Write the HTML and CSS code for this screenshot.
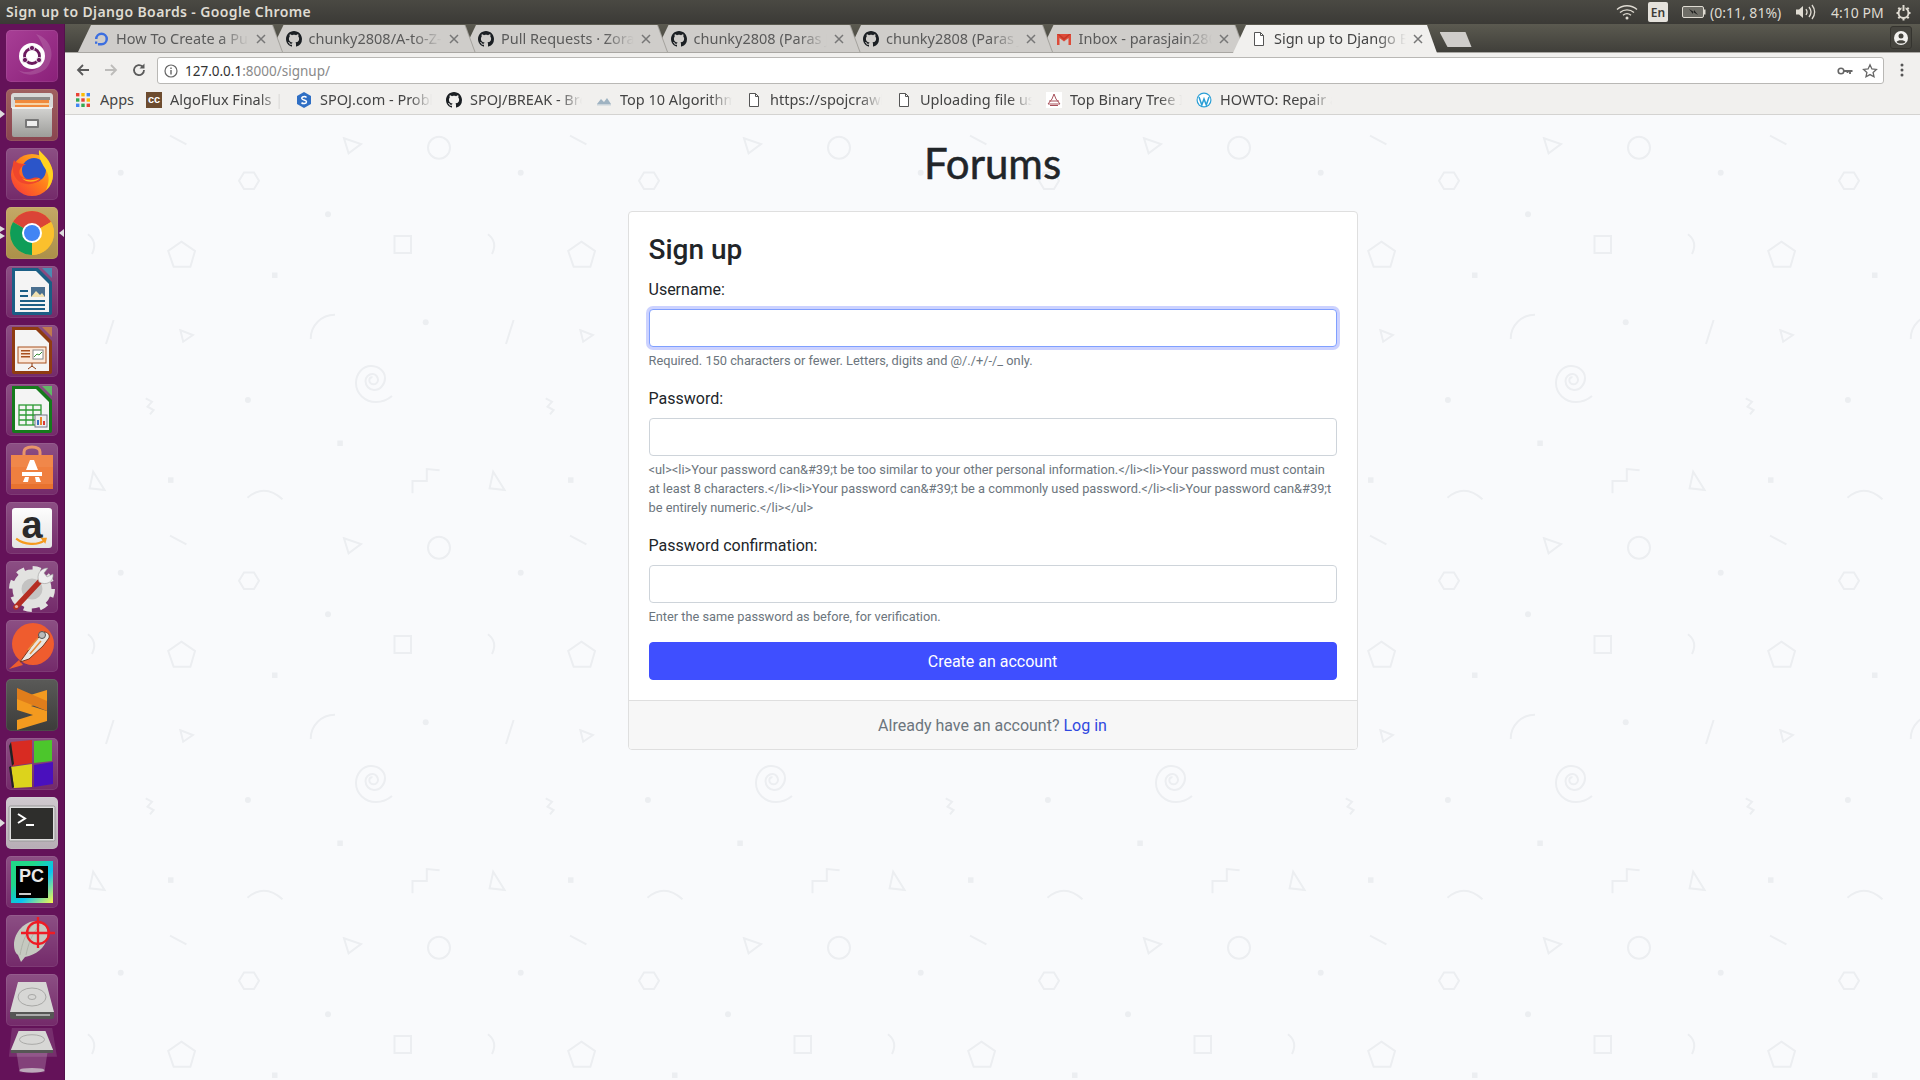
FILE: index.html
```html
<!DOCTYPE html>
<html lang="en">
<head>
<meta charset="utf-8">
<title>Sign up to Django Boards</title>
<link rel="stylesheet" href="styles.css">
</head>
<body>
<svg class="defs" width="0" height="0" aria-hidden="true">
  <symbol id="gh" viewBox="0 0 16 16"><path fill="#1b1f23" d="M8 0C3.58 0 0 3.58 0 8c0 3.54 2.29 6.53 5.47 7.59.4.07.55-.17.55-.38 0-.19-.01-.82-.01-1.49-2.01.37-2.53-.49-2.69-.94-.09-.23-.48-.94-.82-1.13-.28-.15-.68-.52-.01-.53.63-.01 1.08.58 1.23.82.72 1.21 1.87.87 2.33.66.07-.52.28-.87.51-1.07-1.78-.2-3.64-.89-3.64-3.95 0-.87.31-1.59.82-2.15-.08-.2-.36-1.02.08-2.12 0 0 .67-.21 2.2.82.64-.18 1.32-.27 2-.27.68 0 1.36.09 2 .27 1.53-1.04 2.2-.82 2.2-.82.44 1.1.16 1.92.08 2.12.51.56.82 1.27.82 2.15 0 3.07-1.87 3.75-3.65 3.95.29.25.54.73.54 1.48 0 1.07-.01 1.93-.01 2.2 0 .21.15.46.55.38A8.013 8.013 0 0 0 16 8c0-4.42-3.58-8-8-8z"/></symbol>
  <symbol id="doc" viewBox="0 0 16 16"><path fill="#fff" stroke="#555" stroke-width="1" d="M3.5 1.5h6l3 3v10h-9z"/><path fill="none" stroke="#555" d="M9.5 1.5v3h3"/></symbol>
  <symbol id="close" viewBox="0 0 10 10"><path stroke="#777" stroke-width="1.5" d="M1 1l8 8M9 1l-8 8"/></symbol>
</svg>

<header class="topbar">
  <div class="win-title">Sign up to Django Boards - Google Chrome</div>
  <div class="indicators">
    <svg class="ind-wifi" width="22" height="16" viewBox="0 0 22 16"><g fill="none" stroke="#dfdbd2" stroke-width="1.4"><path d="M1 5.5c5.5-5 14.5-5 20 0"/><path d="M4 8.5c4-3.5 10-3.5 14 0"/><path d="M7 11.3c2.400-2 5.600-2 8 0"/></g><circle cx="11" cy="14" r="1.500" fill="#dfdbd2"/></svg>
    <span class="ind-lang">En</span>
    <svg class="ind-batt" width="24" height="13" viewBox="0 0 24 13"><rect x=".5" y=".5" width="21" height="11" rx="1.500" fill="#6f6e67" stroke="#dfdbd2"/><rect x="22" y="3.500" width="1.500" height="5" fill="#dfdbd2"/><path d="M7 3l5 3 0-2 4 5-5-3 0 2z" fill="#222"/></svg>
    <span class="ind-text ind-pct">(0:11, 81%)</span>
    <svg class="ind-vol" width="21" height="16" viewBox="0 0 21 16"><path d="M1 5.500h3l4-3.500v12l-4-3.500h-3z" fill="#dfdbd2"/><g fill="none" stroke="#dfdbd2" stroke-width="1.300"><path d="M11 5c1.400 2 1.400 4 0 6"/><path d="M14 3c2.400 3 2.400 7 0 10"/><path d="M17 1c3.400 4.500 3.400 9.500 0 14"/></g></svg>
    <span class="ind-text ind-clock">4:10 PM</span>
    <svg class="ind-gear" width="17" height="17" viewBox="0 0 17 17"><circle cx="8.500" cy="9" r="5" fill="none" stroke="#dfdbd2" stroke-width="2"/><path d="M8.500 1v6" stroke="#3f3e39" stroke-width="4"/><path d="M8.500 1v6M1.500 9h2M13.500 9h2M3.300 3.800l1.500 1.500M13.700 3.800l-1.500 1.500M3.300 14.200l1.500-1.500M13.700 14.200l-1.500-1.500M8.500 14v2.500" stroke="#dfdbd2" stroke-width="2"/></svg>
  </div>
</header>

<div class="desktop">
  <nav class="launcher">
    <div class="tile tile-dash"><svg viewBox="0 0 52 52"><path d="M30 4c14 4 20 20 12 32-6 9-22 12-30 4 12 6 26-2 26-16 0-8-4-15-8-20z" fill="#fff" opacity=".14"/><circle cx="26" cy="26" r="13" fill="#fff"/><circle cx="26" cy="26" r="7.500" fill="none" stroke="#6b1a5e" stroke-width="2.800"/><circle cx="26" cy="18" r="2.600" fill="#6b1a5e" stroke="#fff" stroke-width=".8"/><circle cx="19" cy="30" r="2.600" fill="#6b1a5e" stroke="#fff" stroke-width=".8"/><circle cx="33" cy="30" r="2.600" fill="#6b1a5e" stroke="#fff" stroke-width=".8"/></svg></div>
    <div class="tile tile-files"><svg viewBox="0 0 52 52"><defs><linearGradient id="cab" x1="0" y1="0" x2="0" y2="1"><stop offset="0" stop-color="#d4d4d2"/><stop offset="1" stop-color="#9d9d9a"/></linearGradient></defs><path d="M5 7c0-1.500 1-3 3-3h36c2 0 3 1.500 3 3v12H5z" fill="#d9d9d7"/><rect x="8" y="8" width="36" height="3" fill="#8c8a88"/><rect x="9" y="11" width="34" height="9" fill="#f08a3c"/><rect x="9" y="14" width="34" height="2" fill="#f7d3a5"/><rect x="6" y="18" width="40" height="30" rx="2" fill="url(#cab)"/><rect x="6" y="18" width="40" height="2" fill="#efefed"/><rect x="19" y="30" width="14" height="9" rx="1" fill="#777"/><rect x="21" y="32" width="10" height="5" fill="#eee"/></svg></div>
    <div class="tile tile-plain"><svg viewBox="0 0 52 52"><defs><linearGradient id="ffo" x1="0" y1="1" x2="1" y2="0"><stop offset="0" stop-color="#f5313c"/><stop offset=".5" stop-color="#ff7b1c"/><stop offset="1" stop-color="#ffc820"/></linearGradient></defs><circle cx="26" cy="27" r="21" fill="url(#ffo)"/><circle cx="28" cy="22" r="12" fill="#2b55c9"/><path d="M33 2c3 4 13 10 14 24 0 7-3 13-7 16 3-6 4-14 0-20-3-5-8-12-7-20z" fill="#ffd21f"/><path d="M8 12c2 3 6 4 12 4-6 3-8 7-6 11 3 4 9 5 13 3 4-1 6 0 8 1-4 5-14 7-21 3C7 30 5 20 8 12z" fill="#f0462c"/><path d="M16 30c5 3 11 3 18 0-3 4-13 6-18 0z" fill="#ffb21e"/></svg></div>
    <div class="tile tile-chrome"><svg viewBox="0 0 52 52"><circle cx="26" cy="26" r="22" fill="#fbc02d"/><path d="M26 26L7 15A22 22 0 0 1 45 15z" fill="#db4437"/><path d="M26 26L7 15A22 22 0 0 0 26 48z" fill="#0f9d58"/><path d="M26 26L26 48A22 22 0 0 0 45 15z" fill="#fbc02d"/><circle cx="26" cy="26" r="10" fill="#fff"/><circle cx="26" cy="26" r="8" fill="#4285f4"/></svg></div>
    <div class="tile tile-plain"><svg viewBox="0 0 52 52"><path d="M6 2h26l14 14v31a2 2 0 0 1-2 2H8a2 2 0 0 1-2-2z" fill="#1b5e85"/><path d="M36 2h10v10z" fill="#4b8bb2"/><path d="M9 5h21l13 13v28H9z" fill="#f4f4f4"/><g fill="#1b5e85"><rect x="14" y="24" width="8" height="2"/><rect x="14" y="29" width="8" height="2"/><rect x="14" y="34" width="25" height="2"/><rect x="14" y="38" width="25" height="2"/><rect x="14" y="42" width="25" height="2"/></g><rect x="25" y="21" width="14" height="10" fill="#4a6f8f"/><path d="M25 31l5-6 4 4 2-2 3 4z" fill="#f0e0b0"/></svg></div>
    <div class="tile tile-plain"><svg viewBox="0 0 52 52"><path d="M6 2h26l14 14v31a2 2 0 0 1-2 2H8a2 2 0 0 1-2-2z" fill="#8f3c12"/><path d="M36 2h10v10z" fill="#c07a4f"/><path d="M9 5h21l13 13v28H9z" fill="#f4f4f4"/><rect x="12" y="22" width="28" height="16" fill="#fbe7d8" stroke="#a8501e"/><g fill="#a8501e"><rect x="15" y="25" width="9" height="1.500"/><rect x="15" y="28" width="9" height="1.500"/><rect x="15" y="31" width="9" height="1.500"/></g><rect x="27" y="25" width="10" height="9" fill="#fff" stroke="#888"/><path d="M28 32l3-3 2 1 3-3" fill="none" stroke="#3a8f3a"/><path d="M26 38v4M22 44l4-3 4 3" stroke="#8f3c12" fill="none"/></svg></div>
    <div class="tile tile-plain"><svg viewBox="0 0 52 52"><path d="M6 2h26l14 14v31a2 2 0 0 1-2 2H8a2 2 0 0 1-2-2z" fill="#167a1c"/><path d="M36 2h10v10z" fill="#62b866"/><path d="M9 5h21l13 13v28H9z" fill="#f4f4f4"/><g fill="none" stroke="#2d9a35" stroke-width="1.300"><rect x="13" y="21" width="22" height="20"/><path d="M13 26h22M13 31h22M13 36h22M20 21v20M27 21v20"/></g><rect x="29" y="31" width="12" height="12" fill="#eee" stroke="#778"/><rect x="31" y="36" width="2" height="5" fill="#3a6fc0"/><rect x="34" y="33" width="2" height="8" fill="#e8842c"/><rect x="37" y="37" width="2" height="4" fill="#d83a3a"/></svg></div>
    <div class="tile tile-plain"><svg viewBox="0 0 52 52"><path d="M18 14V9c0-4 3-5 8-5s8 1 8 5v5" fill="none" stroke="#e8956a" stroke-width="3"/><rect x="5" y="12" width="42" height="34" fill="#ef7f3f"/><rect x="5" y="12" width="42" height="12" fill="#f0874a"/><rect x="5" y="41" width="42" height="5" fill="#e8722f"/><path d="M24 17h4l4 10h-12zM16 29h20v4H16zM19 34h4l-1 5h-5zM29 34h4l2 5h-5z" fill="#fff"/></svg></div>
    <div class="tile tile-plain"><div class="amazon"><span class="amazon-a">a</span><svg class="amazon-smile" viewBox="0 0 40 12"><path d="M1 2c10 8 26 8 34 2" fill="none" stroke="#f59a1e" stroke-width="2.500"/><path d="M30 1l8 0-2 7z" fill="#f59a1e"/></svg></div></div>
    <div class="tile tile-plain"><svg viewBox="0 0 52 52"><circle cx="26" cy="28" r="15" fill="#c4c3c2" stroke="#e2e2e0" stroke-width="9"/><circle cx="26" cy="28" r="20.500" fill="none" stroke="#e2e2e0" stroke-width="5" stroke-dasharray="8 8.100"/><path d="M10 46L36 18" stroke="#b52d22" stroke-width="5.500" stroke-linecap="round"/><circle cx="10.500" cy="45.500" r="1.600" fill="#e6b0a8"/><path d="M33 21c-3-7 1-14 9-14l-4 5 3 4 6-3c1 8-7 12-14 8z" fill="#eeeeee" stroke="#999" stroke-width=".6"/></svg></div>
    <div class="tile tile-plain"><svg viewBox="0 0 52 52"><circle cx="27" cy="24" r="21" fill="#ef5c2e"/><path d="M3 49l10-9 4 5z" fill="#ef5c2e"/><path d="M14 42l16-22 8-8c4 0 6 3 5 6l-6 8-14 13z" fill="#e8e5e0" stroke="#7a3a22"/><path d="M22 30l10-12M24 34l11-13" stroke="#e88d3a" stroke-width="1.500"/><circle cx="36" cy="15" r="3.500" fill="#bbb" stroke="#555"/></svg></div>
    <div class="tile tile-subl"><svg viewBox="0 0 52 52"><path d="M11 20l30-9v11l-16 5 16 5v10l-30 9v-10l16-5-16-5z" fill="#f39a1f"/><path d="M11 20l30 12v-10l-30-13z" fill="#e07d1b"/></svg></div>
    <div class="tile tile-plain"><svg viewBox="0 0 52 52"><path d="M5 4l21-2v23l-20 3z" fill="#d82b22"/><path d="M5 4L3 8l3 20 2-2z" fill="#222"/><path d="M28 3l18-1v21l-18 2z" fill="#4cc62c"/><path d="M5 29l21-3v23l-18 1z" fill="#dcd31c"/><path d="M3 29l2-1 3 21-2 1z" fill="#222"/><path d="M28 27l19-3v22l-19 3z" fill="#4a10bd"/></svg></div>
    <div class="tile tile-term"><svg viewBox="0 0 52 52"><rect x="3" y="9" width="46" height="35" rx="1.500" fill="#ddd" stroke="#999"/><rect x="5" y="11" width="42" height="31" fill="#2e2e2c"/><path d="M12 17l7 4.500-7 4.500" fill="none" stroke="#fff" stroke-width="2"/><rect x="20" y="27" width="8" height="2" fill="#fff"/></svg></div>
    <div class="tile tile-plain"><div class="pycharm"><span class="pc-text">PC</span><span class="pc-line"></span></div></div>
    <div class="tile tile-plain"><svg viewBox="0 0 52 52"><path d="M8 30c0-13 11-24 22-24 9 0 13 8 11 17-2 10-11 17-22 19l-4 5-3-7c-3-2-4-6-4-10z" fill="#c5c9c0"/><path d="M14 40c2-10 4-20 14-32M20 40c2-10 6-22 14-30" stroke="#aeb2a8" fill="none"/><circle cx="32" cy="18" r="11" fill="none" stroke="#ee1c25" stroke-width="2.300"/><path d="M32 2v31M15 18h34" stroke="#ee1c25" stroke-width="2.300"/></svg></div>
    <div class="tile tile-plain"><svg viewBox="0 0 52 52"><path d="M12 8h28l8 30H4z" fill="#d7d7d5"/><ellipse cx="26" cy="23" rx="14" ry="9" fill="none" stroke="#a8a8a6"/><ellipse cx="26" cy="23" rx="4" ry="2.500" fill="none" stroke="#a8a8a6"/><path d="M4 38h44v5a2 2 0 0 1-2 2H6a2 2 0 0 1-2-2z" fill="#565655"/><rect x="10" y="40" width="34" height="2" fill="#aaa"/></svg></div>
    <div class="tile tile-trash"><svg viewBox="0 0 52 52"><path d="M5 0h42l5 30-2 0H2z" fill="#fff" opacity=".12"/><path d="M12 3h28l8 20H4z" fill="#d7d7d5"/><ellipse cx="26" cy="12" rx="13" ry="5" fill="none" stroke="#a8a8a6"/><path d="M4 23h44v3H4z" fill="#565655"/><path d="M10 26h32l-3 20H13z" fill="#fff" opacity=".2"/><ellipse cx="26" cy="44" rx="13" ry="2.500" fill="#d5d5d5" opacity=".7"/></svg></div>
    <span class="pip pip-files"></span>
    <span class="pip pip-chrome-a"></span>
    <span class="pip pip-chrome-b"></span>
    <span class="pip pip-chrome-r"></span>
    <span class="pip pip-term"></span>
  </nav>

  <div class="window">
    <div class="tabstrip">
      <div class="tab"><div class="tab-body">
        <svg class="fav" viewBox="0 0 16 16"><path d="M8.500 1.500a6.500 6.500 0 0 1 0 13H5v-2.500h3.500a4 4 0 0 0 0-8 4 4 0 0 0-4 4H2a6.500 6.500 0 0 1 6.500-6.500z" fill="#3c6fe0"/><rect x="2" y="10.500" width="2.300" height="2.300" fill="#3c6fe0"/></svg>
        <span class="tab-title">How To Create a Pull Request</span><svg class="tab-x" viewBox="0 0 10 10"><use href="#close"/></svg>
      </div></div>
      <div class="tab"><div class="tab-body"><svg class="fav" viewBox="0 0 16 16"><use href="#gh"/></svg><span class="tab-title">chunky2808/A-to-Z-Resources</span><svg class="tab-x" viewBox="0 0 10 10"><use href="#close"/></svg></div></div>
      <div class="tab"><div class="tab-body"><svg class="fav" viewBox="0 0 16 16"><use href="#gh"/></svg><span class="tab-title">Pull Requests · Zoranpandovski</span><svg class="tab-x" viewBox="0 0 10 10"><use href="#close"/></svg></div></div>
      <div class="tab"><div class="tab-body"><svg class="fav" viewBox="0 0 16 16"><use href="#gh"/></svg><span class="tab-title">chunky2808 (Paras Jain)</span><svg class="tab-x" viewBox="0 0 10 10"><use href="#close"/></svg></div></div>
      <div class="tab"><div class="tab-body"><svg class="fav" viewBox="0 0 16 16"><use href="#gh"/></svg><span class="tab-title">chunky2808 (Paras Jain)</span><svg class="tab-x" viewBox="0 0 10 10"><use href="#close"/></svg></div></div>
      <div class="tab"><div class="tab-body"><svg class="fav" viewBox="0 0 16 16"><path d="M1 3h14v11h-2.500V7L8 10.500 3.500 7v7H1z" fill="#dd4b39"/><path d="M1 3h2l5 4 5-4h2L8 9z" fill="#c53929"/></svg><span class="tab-title">Inbox - parasjain2808@gmail</span><svg class="tab-x" viewBox="0 0 10 10"><use href="#close"/></svg></div></div>
      <div class="tab tab-active"><div class="tab-body"><svg class="fav" viewBox="0 0 16 16"><use href="#doc"/></svg><span class="tab-title">Sign up to Django Boards</span><svg class="tab-x" viewBox="0 0 10 10"><use href="#close"/></svg></div></div>
      <div class="newtab"></div>
      <div class="profile"><svg width="16" height="16" viewBox="0 0 16 16"><circle cx="8" cy="8" r="7" fill="#f2f1ef"/><circle cx="8" cy="6" r="2.500" fill="#45443e"/><path d="M3.500 12c1-2.500 8-2.500 9 0-2 2-7 2-9 0z" fill="#45443e"/></svg></div>
    </div>

    <div class="toolbar">
      <svg class="tb-btn" viewBox="0 0 16 16"><path d="M14 8H3M8 3L3 8l5 5" fill="none" stroke="#5a5a5a" stroke-width="1.800"/></svg>
      <svg class="tb-btn" viewBox="0 0 16 16"><path d="M2 8h11M8 3l5 5-5 5" fill="none" stroke="#bdbcba" stroke-width="1.800"/></svg>
      <svg class="tb-btn" viewBox="0 0 16 16"><path d="M13 8a5 5 0 1 1-1.500-3.500" fill="none" stroke="#5a5a5a" stroke-width="1.800"/><path d="M13.500 1.500v5h-5z" fill="#5a5a5a"/></svg>
      <div class="urlbar">
        <svg class="url-info" viewBox="0 0 14 14"><circle cx="7" cy="7" r="6" fill="none" stroke="#666" stroke-width="1.200"/><path d="M7 6v4.500M7 3.500v1.500" stroke="#666" stroke-width="1.400"/></svg>
        <span class="url-text"><span class="url-host">127.0.0.1</span>:8000/signup/</span>
        <svg class="url-key" viewBox="0 0 16 10"><circle cx="4" cy="5" r="2.800" fill="none" stroke="#666" stroke-width="1.600"/><path d="M7 5h8.500M13 5v3M10.500 5v2" stroke="#666" stroke-width="1.800"/></svg>
        <svg class="url-star" viewBox="0 0 16 16"><path d="M8 1.800l1.900 4.100 4.500.5-3.300 3 .9 4.400L8 11.600l-4 2.200.9-4.400-3.300-3 4.500-.5z" fill="none" stroke="#666" stroke-width="1.300"/></svg>
      </div>
      <svg class="tb-menu" viewBox="0 0 4 14"><circle cx="2" cy="2" r="1.500" fill="#555"/><circle cx="2" cy="7" r="1.500" fill="#555"/><circle cx="2" cy="12" r="1.500" fill="#555"/></svg>
    </div>

    <div class="bookmarks">
      <div class="bm bm-apps"><svg class="fav" viewBox="0 0 16 16"><rect x="1" y="1" width="3.400" height="3.400" fill="#ea4335"/><rect x="6.300" y="1" width="3.400" height="3.400" fill="#fbbc05"/><rect x="11.600" y="1" width="3.400" height="3.400" fill="#4285f4"/><rect x="1" y="6.300" width="3.400" height="3.400" fill="#34a853"/><rect x="6.300" y="6.300" width="3.400" height="3.400" fill="#ea4335"/><rect x="11.600" y="6.300" width="3.400" height="3.400" fill="#fbbc05"/><rect x="1" y="11.600" width="3.400" height="3.400" fill="#4285f4"/><rect x="6.300" y="11.600" width="3.400" height="3.400" fill="#34a853"/><rect x="11.600" y="11.600" width="3.400" height="3.400" fill="#ea4335"/></svg><span class="bm-label">Apps</span></div>
      <div class="bm"><span class="fav fav-cc">cc</span><span class="bm-label">AlgoFlux Finals | CodeChef</span></div>
      <div class="bm"><svg class="fav" viewBox="0 0 16 16"><path d="M8 0l7 4v8l-7 4-7-4V4z" fill="#2f6fc4"/><path d="M10.500 5.500C9 4 5.500 4.500 5.800 6.500c.3 2 4.700 1 4.700 3.300 0 2-3.500 2.300-5 .8" fill="none" stroke="#fff" stroke-width="1.500"/></svg><span class="bm-label">SPOJ.com - Problem</span></div>
      <div class="bm"><svg class="fav" viewBox="0 0 16 16"><use href="#gh"/></svg><span class="bm-label">SPOJ/BREAK - Break</span></div>
      <div class="bm"><svg class="fav" viewBox="0 0 16 16"><path d="M1 12l4-5 3 3 3-4 4 6z" fill="#9fb3c2"/><rect x="1" y="12" width="14" height="1.500" fill="#c9d3da"/></svg><span class="bm-label">Top 10 Algorithms</span></div>
      <div class="bm"><svg class="fav" viewBox="0 0 16 16"><use href="#doc"/></svg><span class="bm-label">https://spojcrawler</span></div>
      <div class="bm"><svg class="fav" viewBox="0 0 16 16"><use href="#doc"/></svg><span class="bm-label">Uploading file using</span></div>
      <div class="bm"><svg class="fav" viewBox="0 0 16 16"><rect width="16" height="16" fill="#fff"/><path d="M8 2l2 5 4 5H2l4-5z" fill="none" stroke="#a8505a"/><path d="M3 9h10M4 13.500h8" stroke="#a8505a"/></svg><span class="bm-label">Top Binary Tree Interview</span></div>
      <div class="bm"><svg class="fav" viewBox="0 0 16 16"><circle cx="8" cy="8" r="7.500" fill="#2a9fd6"/><circle cx="8" cy="8" r="6.300" fill="#fff"/><path d="M3 5l2.800 8L8 7l2.300 6 2.700-8" fill="none" stroke="#2a9fd6" stroke-width="1.500"/></svg><span class="bm-label">HOWTO: Repair and</span></div>
    </div>

    <main class="page">
      <h1 class="logo">Forums</h1>
      <section class="card">
        <div class="card-body">
          <h3 class="card-title">Sign up</h3>
          <form class="signup">
            <div class="form-group">
              <label class="field-label" for="id_username">Username:</label>
              <input class="form-control form-control-focus" id="id_username" type="text">
              <small class="help">Required. 150 characters or fewer. Letters, digits and @/./+/-/_ only.</small>
            </div>
            <div class="form-group">
              <label class="field-label" for="id_password1">Password:</label>
              <input class="form-control" id="id_password1" type="password">
              <small class="help">&lt;ul&gt;&lt;li&gt;Your password can&amp;#39;t be too similar to your other personal information.&lt;/li&gt;&lt;li&gt;Your password must contain at least 8 characters.&lt;/li&gt;&lt;li&gt;Your password can&amp;#39;t be a commonly used password.&lt;/li&gt;&lt;li&gt;Your password can&amp;#39;t be entirely numeric.&lt;/li&gt;&lt;/ul&gt;</small>
            </div>
            <div class="form-group form-group-last">
              <label class="field-label" for="id_password2">Password confirmation:</label>
              <input class="form-control" id="id_password2" type="password">
              <small class="help">Enter the same password as before, for verification.</small>
            </div>
            <button class="btn-primary" type="button">Create an account</button>
          </form>
        </div>
        <div class="card-footer">Already have an account? <a class="login-link" href="#">Log in</a></div>
      </section>
    </main>
  </div>
</div>
</body>
</html>
```
FILE: styles.css
```css
* { box-sizing: border-box; }
html, body { margin: 0; height: 100%; }
body {
  width: 1920px;
  height: 1080px;
  overflow: hidden;
  display: flex;
  flex-direction: column;
  font-family: Roboto, "Noto Sans", sans-serif;
  background: #3c3b37;
}
.defs { display: block; height: 0; }

/* Ubuntu panel */
.topbar {
  height: 24px;
  flex: none;
  display: flex;
  align-items: center;
  justify-content: space-between;
  padding: 0 8px 0 6px;
  background: linear-gradient(#4a4943, #3b3a36);
  color: #dfdbd2;
}
.win-title {
  padding-bottom: 2px;
  font: 600 14px "Noto Sans", sans-serif;
  letter-spacing: .38px;
  white-space: nowrap;
}
.indicators { display: flex; align-items: center; }
.ind-wifi { margin-right: 10px; }
.ind-lang {
  width: 20px;
  height: 20px;
  margin-right: 14px;
  display: flex;
  align-items: center;
  justify-content: center;
  border-radius: 2px;
  background: #e5e2dc;
  color: #3c3b37;
  font: 600 12px "Noto Sans", sans-serif;
}
.ind-batt { margin-right: 4px; }
.ind-text { font: 400 14px "Noto Sans", sans-serif; white-space: nowrap; }
.ind-pct { width: 85px; }
.ind-vol { margin-right: 15px; }
.ind-clock { width: 64px; }

/* Layout */
.desktop { flex: 1; min-height: 0; display: flex; }
.window { flex: 1; min-width: 0; display: flex; flex-direction: column; }

/* Launcher */
.launcher {
  position: relative;
  flex: none;
  width: 65px;
  height: 1056px;
  padding: 6px 7px 0 6px;
  display: flex;
  flex-direction: column;
  gap: 7px;
  overflow: hidden;
  background: #641259;
  border-right: 1px solid #54104c;
}
.tile {
  flex: none;
  width: 52px;
  height: 52px;
  border-radius: 5px;
  background: linear-gradient(rgba(255,255,255,.26), rgba(255,255,255,.1));
  box-shadow: inset 0 0 0 1px rgba(255,255,255,.08);
}
.tile svg { display: block; width: 100%; height: 100%; }
.tile-dash { background: linear-gradient(135deg, #a83f96, #8a2079); }
.tile-files { background: linear-gradient(#a0605f, #8a4550); }
.tile-chrome { background: linear-gradient(#c4a866, #ab9049); }
.tile-subl { background: linear-gradient(#5a5a58, #3c3c3a); }
.tile-term { background: linear-gradient(#cfc9ce, #b7adb5); }
.tile-trash { height: 50px; margin-top: -5px; background: none; box-shadow: none; }
.amazon {
  position: relative;
  margin: 6px 6px;
  height: 40px;
  border-radius: 3px;
  background: linear-gradient(#fdfdfd, #e4e4e4);
  text-align: center;
  overflow: hidden;
}
.amazon-a {
  display: block;
  font: 700 38px/34px "Liberation Sans", sans-serif;
  color: #2a2a2a;
}
.tile .amazon-smile {
  position: absolute;
  left: 2px;
  bottom: 1px;
  width: 36px;
  height: 10px;
}
.pycharm {
  margin: 5px 5px;
  height: 42px;
  padding: 5px;
  background: linear-gradient(135deg, #21d789 0%, #21d789 30%, #07c3f2 60%, #fcf84a 100%);
}
.pc-text {
  display: block;
  background: #000;
  color: #e8e8e8;
  height: 32px;
  width: 32px;
  padding: 2px 0 0 3px;
  font: 700 18px/17px "Liberation Sans", sans-serif;
}
.pc-line { display: block; width: 12px; height: 2px; margin: -5px 0 0 3px; background: #ccc; position: relative; }
.pip { position: absolute; width: 0; height: 0; border-style: solid; }
.pip-files { left: 0; top: 86px; border-width: 4px 0 4px 5px; border-color: transparent transparent transparent #ddd; }
.pip-chrome-a { left: 0; top: 202px; border-width: 3px 0 3px 5px; border-color: transparent transparent transparent #ddd; }
.pip-chrome-b { left: 0; top: 209px; border-width: 3px 0 3px 5px; border-color: transparent transparent transparent #ddd; }
.pip-chrome-r { right: 0; top: 205px; border-width: 4px 5px 4px 0; border-color: transparent #ddd transparent transparent; }
.pip-term { left: 0; top: 795px; border-width: 4px 0 4px 5px; border-color: transparent transparent transparent #ddd; }

/* Tabs */
.tabstrip {
  flex: none;
  height: 29px;
  display: flex;
  align-items: flex-end;
  padding-left: 13px;
  background: linear-gradient(#5b5a50, #403f3a);
  border-bottom: 1px solid #a9a7a3;
  position: relative;
}
.tab {
  flex: none;
  width: 204px;
  height: 27px;
  margin-right: -11.5px;
  position: relative;
  filter: drop-shadow(1px 0 0 #a3a19c);
}
.tab:nth-child(1) { z-index: 6; }
.tab:nth-child(2) { z-index: 5; }
.tab:nth-child(3) { z-index: 4; }
.tab:nth-child(4) { z-index: 3; }
.tab:nth-child(5) { z-index: 2; }
.tab:nth-child(6) { z-index: 1; }
.tab-active { z-index: 7; height: 28px; margin-bottom: -1px; filter: none; }
.tab-body {
  height: 100%;
  display: flex;
  align-items: center;
  gap: 7px;
  padding: 0 16px 0 15px;
  background: #cfcdca;
  clip-path: polygon(0 100%, 13px 0, calc(100% - 10px) 0, 100% 100%);
}
.tab-active .tab-body { background: #f1f0ee; padding: 0 14px 0 18px; }
.fav { flex: none; width: 16px; height: 16px; }
.tab-title {
  flex: 1;
  min-width: 0;
  padding-bottom: 2px;
  overflow: hidden;
  white-space: nowrap;
  font: 400 14.500px "Noto Sans", sans-serif;
  color: #5a5a5a;
  -webkit-mask-image: linear-gradient(90deg, #000 78%, transparent 100%);
  mask-image: linear-gradient(90deg, #000 78%, transparent 100%);
}
.tab-active .tab-title { color: #444; }
.tab-x { flex: none; width: 10px; height: 10px; }
.newtab {
  flex: none;
  width: 32px;
  height: 15px;
  margin: 0 0 5px 14px;
  background: #cfcdca;
  clip-path: polygon(0 0, 26px 0, 100% 100%, 8px 100%);
}
.profile {
  margin: 0 8px 3px auto;
  width: 22px;
  height: 23px;
  display: flex;
  align-items: center;
  justify-content: center;
  border-radius: 3px;
  border: 1px solid #35342f;
  background: #46453f;
}

/* Toolbar */
.toolbar {
  flex: none;
  height: 32px;
  display: flex;
  align-items: center;
  padding: 0 0 0 10px;
  background: #f1f0ee;
}
.tb-btn { flex: none; width: 16px; height: 16px; margin: 2px 12px 0 0; }
.urlbar {
  flex: 1;
  height: 27px;
  margin: 3px 0 0 -2px;
  display: flex;
  align-items: center;
  padding: 0 5px 0 6px;
  background: #fff;
  border: 1px solid #b9b8b5;
  border-radius: 3px;
}
.url-info { width: 14px; height: 14px; flex: none; margin-right: 7px; }
.url-text { flex: 1; font: 400 13.5px "Noto Sans", sans-serif; color: #8a8a8a; }
.url-host { color: #333; }
.url-key { width: 16px; height: 10px; flex: none; margin-right: 9px; }
.url-star { width: 16px; height: 16px; flex: none; }
.tb-menu { flex: none; width: 4px; height: 14px; margin: 2px 16px 0 16px; }

/* Bookmarks */
.bookmarks {
  flex: none;
  height: 30px;
  display: flex;
  align-items: center;
  padding-left: 10px;
  background: #f1f0ee;
  border-bottom: 1px solid #d4d3d1;
}
.bm {
  flex: none;
  width: 150px;
  display: flex;
  align-items: center;
  gap: 8px;
  padding-right: 14px;
}
.bm-apps { width: 71px; padding-right: 0; gap: 9px; }
.bm-label {
  flex: 1;
  min-width: 0;
  padding-bottom: 2px;
  overflow: hidden;
  white-space: nowrap;
  font: 400 14.500px "Noto Sans", sans-serif;
  color: #444;
  -webkit-mask-image: linear-gradient(90deg, #000 80%, transparent 100%);
  mask-image: linear-gradient(90deg, #000 80%, transparent 100%);
}
.bm-apps .bm-label { -webkit-mask-image: none; mask-image: none; }
.fav-cc {
  background: #6d4c2f;
  color: #fff;
  font: 700 11px/15px "Liberation Sans", sans-serif;
  text-align: center;
}

/* Page */
.page {
  flex: 1;
  min-height: 0;
  display: flex;
  flex-direction: column;
  align-items: center;
  padding-top: 24px;
  background-color: #f9fafc;
  background-size: 400px 400px;
  background-image: url("data:image/svg+xml,%3Csvg xmlns='http://www.w3.org/2000/svg' width='400' height='400' viewBox='0 0 400 400'%3E%3Cg fill='none' stroke='%23eceef1' stroke-width='2'%3E%3Cpath d='M105 20.700L121.400 29.300'/%3E%3Cpath d='M174 65.700L179 57.500H189L194 65.700L189 74H179Z'/%3E%3Cpath d='M279 23.300L296 29L283.600 38.300Z'/%3E%3Ccircle cx='374' cy='32.700' r='11'/%3E%3Cpath d='M22.900 119.300Q33 127 27 139'/%3E%3Cpath d='M116.400 126.700L130 136L125.400 151.700H108.600L103.200 136Z'/%3E%3Cpath d='M329.500 121H346V138H329.500Z'/%3E%3Cpath d='M48.600 205L41 229'/%3E%3Cpath d='M115.400 215.300L127.900 220L118.200 226.700Z'/%3E%3Cpath d='M245.700 224A24 24 0 0 1 270 199.700'/%3E%3Cpath d='M327 281Q320 287 311 287A20 19 0 0 1 291 268A15 17 0 0 1 306 251A14 12 0 0 1 320 263A11 12 0 0 1 309 275A9 9 0 0 1 300.500 266A7 7 0 0 1 307.500 259A5.500 6 0 0 1 313 265A4.500 4.500 0 0 1 308 269.300A4 4 0 0 1 304.300 265A3 3 0 0 1 307.500 262.300'/%3E%3Cpath d='M80.700 283.300L87 286.700L82.500 291.700L88.600 295L85 299.300'/%3E%3Cpath d='M28.200 356.700L39.600 375L24.600 373.300Z'/%3E%3Cpath d='M182.500 382.700Q199.600 368 217.500 384.300'/%3E%3Cpath d='M347.500 378.300V366H361.800V354L374.600 355.300'/%3E%3C/g%3E%3Cg fill='%23eceef1'%3E%3Ccircle cx='55.700' cy='57.700' r='3'/%3E%3Ccircle cx='263' cy='99.300' r='3'/%3E%3Ccircle cx='360.700' cy='207.300' r='3'/%3E%3Ccircle cx='182.900' cy='285' r='3'/%3E%3Crect x='207' y='157.500' width='5.500' height='5.500'/%3E%3Crect x='272.300' y='325.500' width='5.500' height='5.500'/%3E%3Crect x='103' y='362.300' width='5.500' height='5.500'/%3E%3C/g%3E%3C/svg%3E");
}
.logo {
  margin: 0 0 24px;
  font: 400 42px/48px Lato, sans-serif;
  -webkit-text-stroke: .5px #212529;
  color: #212529;
  text-align: center;
}
.card {
  width: 730px;
  background: #fff;
  border: 1px solid #dfdfdf;
  border-radius: 4px;
  overflow: hidden;
}
.card-body { padding: 20px; }
.card-title {
  margin: 0 0 11px;
  padding-top: 1px;
  font: 500 28px/1.2 Roboto, sans-serif;
  color: #212529;
}
.signup { display: flex; flex-direction: column; }
.form-group { margin-bottom: 17px; }
.form-group-last { margin-bottom: 15px; }
.field-label {
  display: block;
  margin-bottom: 7px;
  font: 400 16px/24px Roboto, sans-serif;
  color: #212529;
}
.form-control {
  display: block;
  width: 100%;
  height: 38px;
  padding: 6px 12px;
  background: #fff;
  border: 1px solid #ced4da;
  border-radius: 4px;
  outline: none;
}
.form-control-focus {
  border-color: #80a0ff;
  box-shadow: 0 0 0 3px rgba(51, 75, 255, .25);
}
.help {
  display: block;
  margin-top: 4px;
  font: 400 12.8px/19.2px Roboto, sans-serif;
  color: #6c757d;
}
.btn-primary {
  display: block;
  width: 100%;
  height: 38px;
  padding: 2px 0 0;
  border: 1px solid #3f4fff;
  border-radius: 4px;
  background: #3f4fff;
  color: #fff;
  font: 400 16px/24px Roboto, sans-serif;
}
.card-footer {
  height: 49px;
  padding: 13px 20px 11px;
  background: #f7f7f7;
  border-top: 1px solid #dfdfdf;
  font: 400 16px/24px Roboto, sans-serif;
  color: #6c757d;
  text-align: center;
}
.login-link { color: #2f49e0; text-decoration: none; }
```
